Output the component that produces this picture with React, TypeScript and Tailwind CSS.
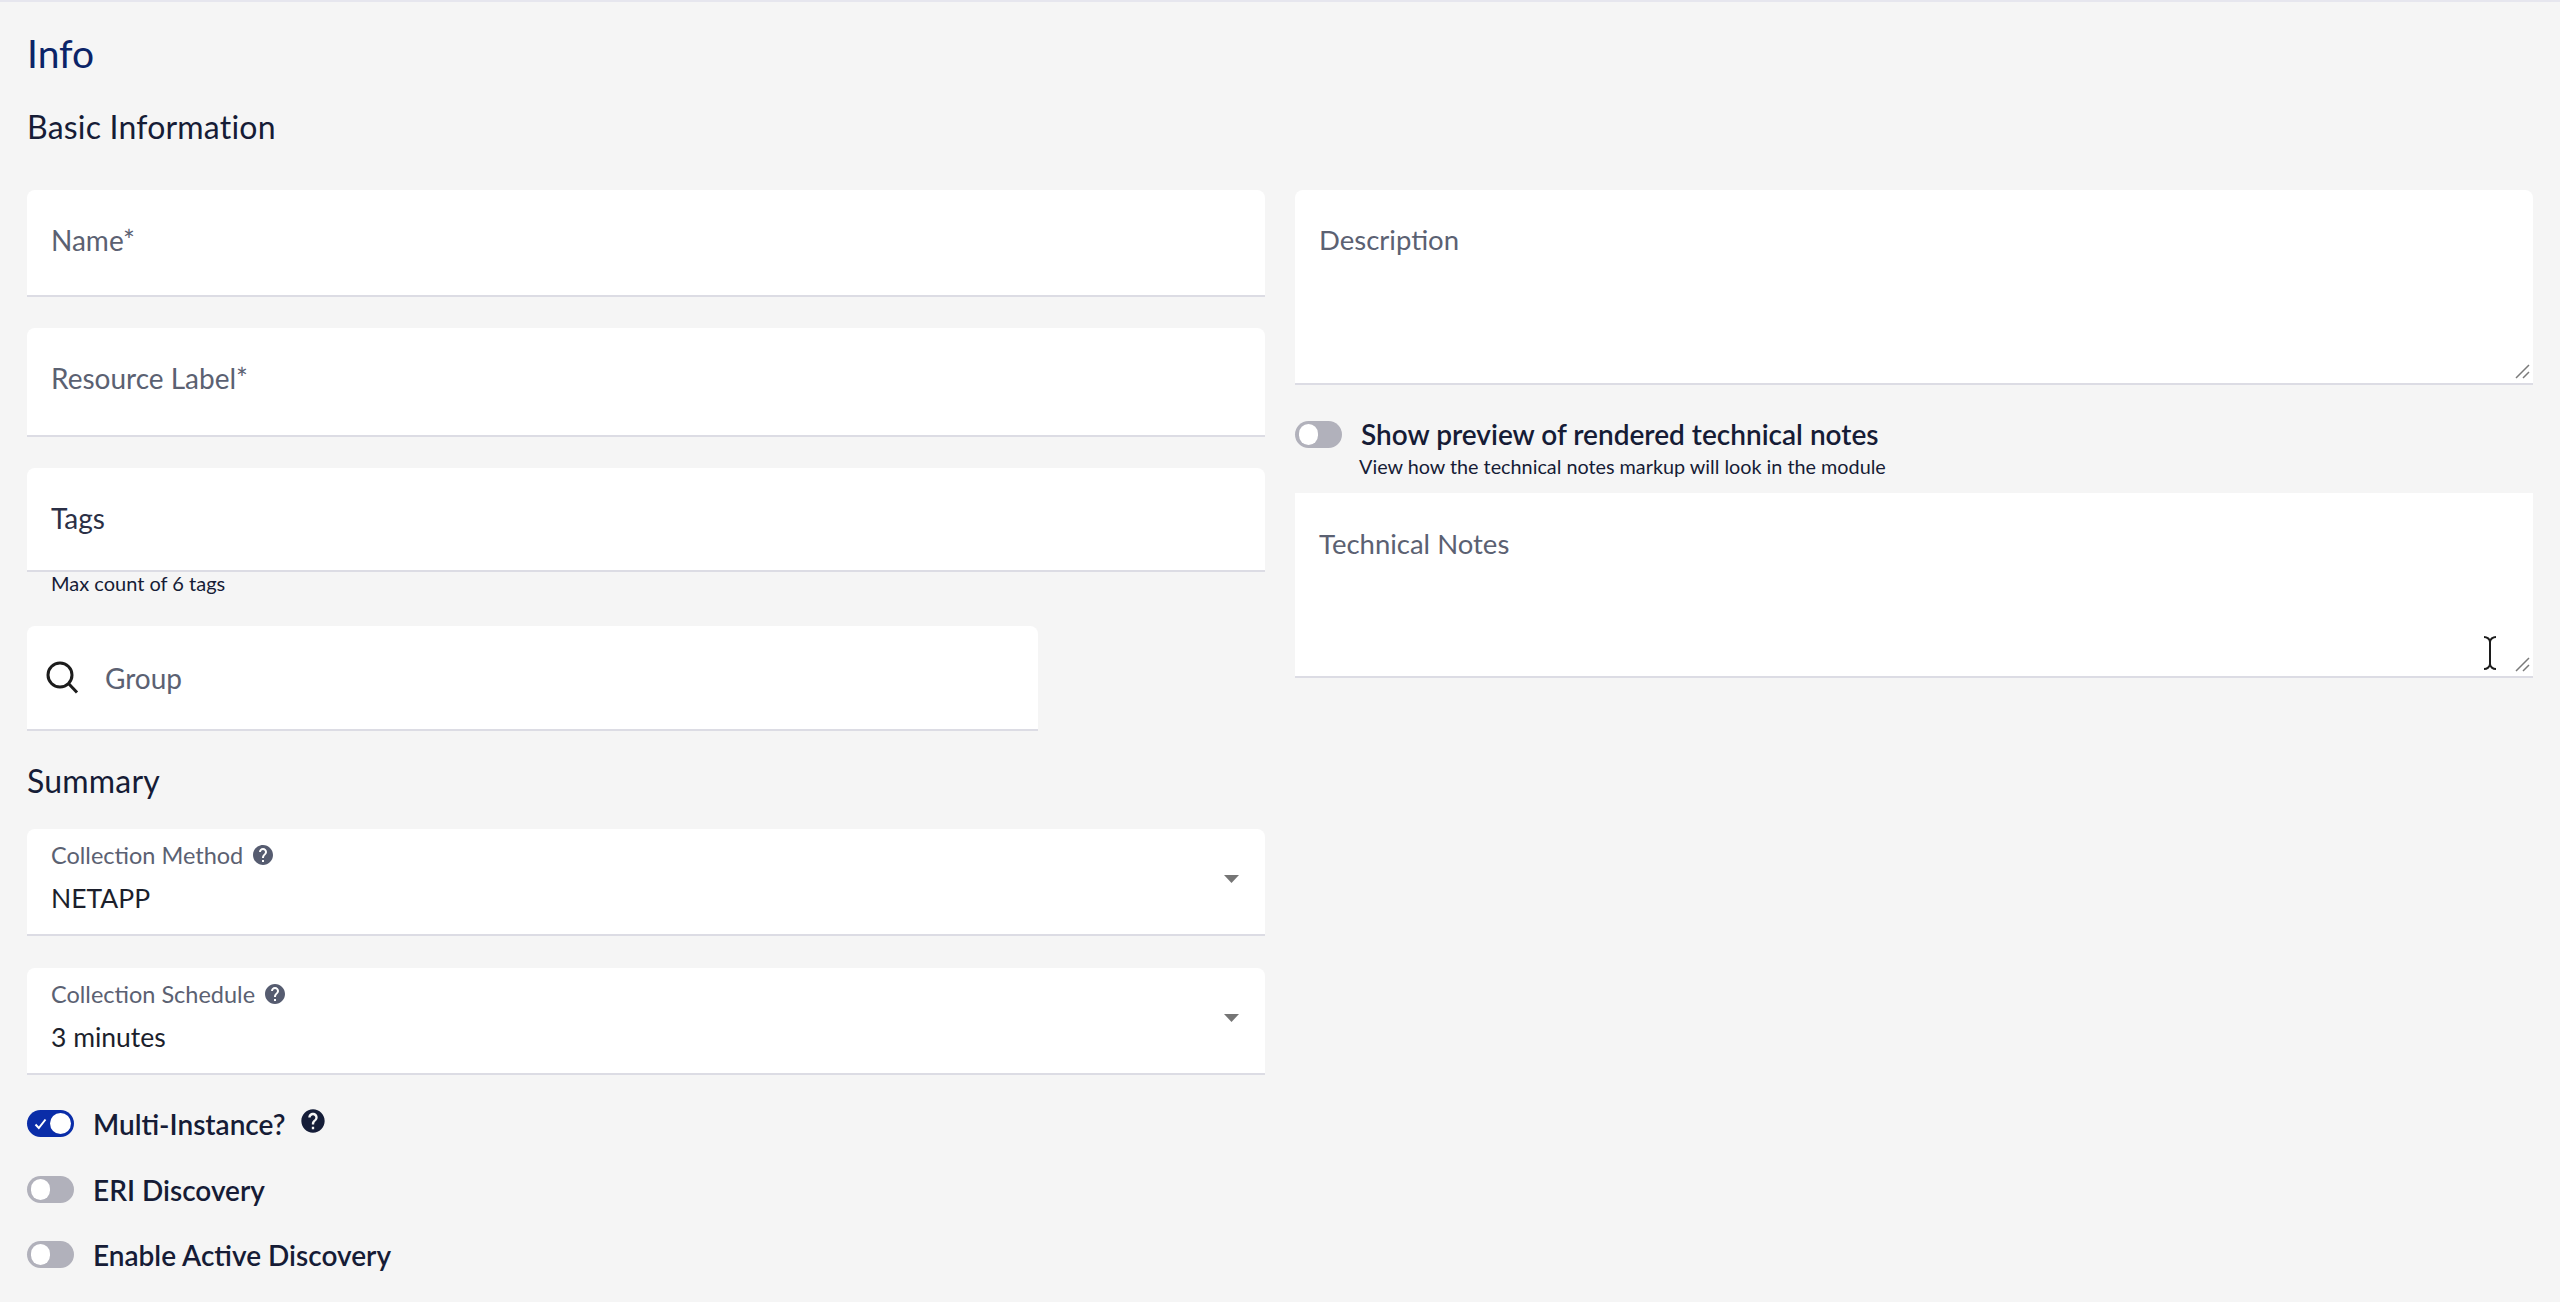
import { ReactNode } from "react";
import { MdHelp } from "react-icons/md";

function Grip() {
  return (
    <svg className="absolute right-[2px] bottom-[3px]" width="16" height="16" viewBox="0 0 16 16">
      <path d="M1 14 L14 1 M8 14 L14 8" stroke="#7a7a7a" strokeWidth="1.5" fill="none" />
    </svg>
  );
}

function Toggle({ on = false }: { on?: boolean }) {
  if (on) {
    return (
      <div className="w-[47px] h-[27px] rounded-full bg-[#0a2da8] flex items-center justify-between pl-[7px] pr-[3px] shrink-0">
        <svg width="13" height="12" viewBox="0 0 13 12">
          <path d="M1.5 6.5 L4.8 10 L11.5 1.5" stroke="#fff" strokeWidth="2" fill="none" />
        </svg>
        <div className="w-[21px] h-[21px] rounded-full bg-white" />
      </div>
    );
  }
  return (
    <div className="w-[47px] h-[27px] rounded-full bg-[#b1b1bb] flex items-center pl-[4px] shrink-0">
      <div className="w-[19px] h-[21px] rounded-full bg-white" />
    </div>
  );
}

function TextField({ label, className = "", dark = false }: { label: string; className?: string; dark?: boolean }) {
  return (
    <div className={`bg-white rounded-t-[8px] border-b-2 border-[#dcdce4] pl-[24px] pt-[32px] ${className}`}>
      <div className={`text-[28px] leading-[36px] ${dark ? "text-[#2b3046]" : "text-[#5b6172]"}`}>{label}</div>
    </div>
  );
}

function SelectField({ label, value, className = "" }: { label: string; value: string; className?: string }) {
  return (
    <div className={`relative h-[107px] bg-white rounded-t-[8px] border-b-2 border-[#dcdce4] pl-[24px] pt-[12px] ${className}`}>
      <div className="flex items-center gap-[8px] text-[23.5px] leading-[28px] text-[#5b6172]">
        {label}
        <MdHelp size={24} color="#565c70" />
      </div>
      <div className="mt-[12px] text-[26.5px] leading-[34px] text-[#1c1f2c]">{value}</div>
      <svg className="absolute right-[26px] top-[46px]" width="15" height="8" viewBox="0 0 15 8">
        <path d="M0 0 H15 L7.5 8 Z" fill="#757575" />
      </svg>
    </div>
  );
}

function ToggleRow({ label, on, children, className = "" }: { label: string; on?: boolean; children?: ReactNode; className?: string }) {
  return (
    <div className={`flex items-center h-[27px] ${className}`}>
      <Toggle on={on} />
      <div className="ml-[19px] mt-[1px] text-[28px] leading-[34px] font-semibold text-[#161c36]">{label}</div>
      {children}
    </div>
  );
}

export default function App() {
  return (
    <div className="h-[1302px] overflow-hidden bg-[#f5f5f5] border-t-2 border-[#e6e6ee] pl-[27px] pr-[27px] font-['Lato',sans-serif]">
      <h1 className="mt-[29px] text-[39px] leading-[44px] text-[#0b2468]">Info</h1>
      <h2 className="mt-[32px] text-[32px] tracking-[0.2px] leading-[40px] text-[#161c36]">Basic Information</h2>

      <div className="mt-[43px] flex gap-[30px]">
        <div className="w-[1238px] flex flex-col">
          <TextField label="Name*" className="h-[107px]" />
          <TextField label="Resource Label*" className="mt-[31px] h-[109px]" />
          <TextField label="Tags" dark className="mt-[31px] h-[104px]" />
          <div className="pl-[24px] -mt-[1px] text-[20px] leading-[24px] text-[#161c36]">Max count of 6 tags</div>
          <div className="mt-[31px] w-[1011px] h-[105px] bg-white rounded-t-[8px] border-b-2 border-[#dcdce4] flex items-center">
            <svg className="ml-[19px]" width="33" height="33" viewBox="0 0 33 33" fill="none">
              <circle cx="14" cy="14" r="12" stroke="#1c1c1c" strokeWidth="3" />
              <path d="M22.5 22.5 L31 31.5" stroke="#1c1c1c" strokeWidth="3" />
            </svg>
            <div className="ml-[26px] text-[28px] leading-[36px] text-[#5b6172]">Group</div>
          </div>
          <h2 className="mt-[30px] text-[32px] tracking-[0.2px] leading-[40px] text-[#161c36]">Summary</h2>
          <SelectField label="Collection Method" value="NETAPP" className="mt-[28px]" />
          <SelectField label="Collection Schedule" value="3 minutes" className="mt-[32px]" />
          <ToggleRow label="Multi-Instance?" on className="mt-[35px]">
            <MdHelp className="ml-[14px] -mt-[6px]" size={28} color="#151d38" />
          </ToggleRow>
          <ToggleRow label="ERI Discovery" className="mt-[39px]" />
          <ToggleRow label="Enable Active Discovery" className="mt-[38px]" />
        </div>

        <div className="w-[1238px] flex flex-col">
          <div className="relative h-[195px] bg-white rounded-t-[8px] border-b-2 border-[#dcdce4] pl-[24px] pt-[32px]">
            <div className="text-[27.5px] leading-[36px] text-[#5b6172]">Description</div>
            <Grip />
          </div>
          <div className="mt-[36px] flex items-center h-[27px]">
            <Toggle />
            <div className="ml-[19px] -mt-[1px] text-[28px] leading-[34px] font-semibold text-[#161c36]">
              Show preview of rendered technical notes
            </div>
          </div>
          <div className="ml-[64px] mt-[6px] text-[19.8px] leading-[24px] text-[#161c36]">
            View how the technical notes markup will look in the module
          </div>
          <div className="relative mt-[15px] h-[185px] bg-white border-b-2 border-[#dcdce4] pl-[24px] pt-[33px]">
            <div className="text-[27.5px] leading-[36px] text-[#5b6172]">Technical Notes</div>
            <svg className="absolute right-[36px] top-[143px]" width="14" height="34" viewBox="0 0 14 34" fill="none">
              <path d="M1 1 C4 1 7 3 7 6 V28 C7 31 4 33 1 33 M13 1 C10 1 7 3 7 6 M7 28 C7 31 10 33 13 33" stroke="#1c1c1c" strokeWidth="2" />
            </svg>
            <Grip />
          </div>
        </div>
      </div>
    </div>
  );
}
